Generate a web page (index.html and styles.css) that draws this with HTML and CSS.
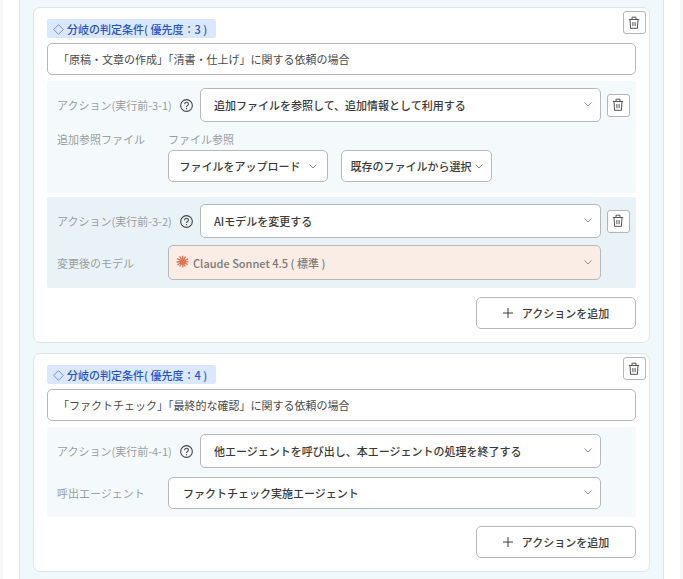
FILE: index.html
```html
<!DOCTYPE html>
<html lang="ja">
<head>
<meta charset="utf-8">
<meta name="viewport" content="width=device-width, initial-scale=1">
<title>分岐の判定条件</title>
<link rel="stylesheet" href="styles.css">
</head>
<body>
<svg class="sprite" aria-hidden="true">
  <symbol id="trash" viewBox="0 0 12 14"><path d="M0.8 3.5H11.2M4 3.3V1.2H8V3.3M2 3.8L2.6 12.3H9.4L10 3.8M4.9 6V10.2M7.1 6V10.2"/></symbol>
  <symbol id="chevron" viewBox="0 0 8 5"><path d="M0.5 0.5L4 4L7.5 0.5"/></symbol>
  <symbol id="help" viewBox="0 0 12 12"><circle cx="6" cy="6" r="5.4"/><path d="M4.2 4.8C4.2 2.4 7.8 2.4 7.8 4.6C7.8 5.9 6 5.8 6 7.4M6 8.4V9.4"/></symbol>
  <symbol id="plus" viewBox="0 0 10 10"><path d="M5 0V10M0 5H10"/></symbol>
  <symbol id="diamond" viewBox="0 0 11 11"><path d="M5.5 0.7L10.3 5.5L5.5 10.3L0.7 5.5Z"/></symbol>
</svg>
<main class="page">
  <div class="panel">
    <section class="card">
      <button class="icon-button card-delete" type="button" aria-label="条件を削除"><svg class="trash"><use href="#trash"/></svg></button>
      <h2 class="chip"><svg class="diamond"><use href="#diamond"/></svg>分岐の判定条件( 優先度：3 )</h2>
      <input class="condition" type="text" aria-label="判定条件" value="「原稿・文章の作成」「清書・仕上げ」に関する依頼の場合">
      <div class="action action-files">
        <div class="row">
          <label class="label label-action" for="a31">アクション(実行前-3-1)</label>
          <button class="help" type="button" aria-label="ヘルプ"><svg><use href="#help"/></svg></button>
          <div class="select"><select id="a31"><option>追加ファイルを参照して、追加情報として利用する</option></select><svg class="chevron"><use href="#chevron"/></svg></div>
          <div class="side"><button class="icon-button" type="button" aria-label="アクションを削除"><svg class="trash"><use href="#trash"/></svg></button></div>
        </div>
        <div class="row row-top">
          <span class="label label-field">追加参照ファイル</span>
          <div class="files">
            <span class="label">ファイル参照</span>
            <div class="file-buttons">
              <button class="button upload" type="button">ファイルをアップロード<svg class="inline-chevron"><use href="#chevron"/></svg></button>
              <button class="button existing" type="button">既存のファイルから選択<svg class="inline-chevron"><use href="#chevron"/></svg></button>
            </div>
          </div>
        </div>
      </div>
      <div class="action action-alt">
        <div class="row">
          <label class="label label-action" for="a32">アクション(実行前-3-2)</label>
          <button class="help" type="button" aria-label="ヘルプ"><svg><use href="#help"/></svg></button>
          <div class="select"><select id="a32"><option>AIモデルを変更する</option></select><svg class="chevron"><use href="#chevron"/></svg></div>
          <div class="side"><button class="icon-button" type="button" aria-label="アクションを削除"><svg class="trash"><use href="#trash"/></svg></button></div>
        </div>
        <div class="row">
          <label class="label label-field" for="model">変更後のモデル</label>
          <div class="select model"><svg class="burst" viewBox="0 0 14 14"><path d="M7 7L7.3 0.8M7 7L10.3 1.7M7 7L13 4.2M7 7L13.4 7.4M7 7L12.6 10.4M7 7L10 12.2M7 7L7.4 13.3M7 7L4 12.4M7 7L1.5 10.8M7 7L0.6 7.5M7 7L1.2 3.8M7 7L3.9 1.5"/></svg><select id="model"><option>Claude Sonnet 4.5 ( 標準 )</option></select><svg class="chevron"><use href="#chevron"/></svg></div>
          <div class="side"></div>
        </div>
      </div>
      <button class="button add" type="button"><svg class="plus"><use href="#plus"/></svg>アクションを追加</button>
    </section>
    <section class="card">
      <button class="icon-button card-delete" type="button" aria-label="条件を削除"><svg class="trash"><use href="#trash"/></svg></button>
      <h2 class="chip"><svg class="diamond"><use href="#diamond"/></svg>分岐の判定条件( 優先度：4 )</h2>
      <input class="condition" type="text" aria-label="判定条件" value="「ファクトチェック」「最終的な確認」に関する依頼の場合">
      <div class="action">
        <div class="row">
          <label class="label label-action" for="a41">アクション(実行前-4-1)</label>
          <button class="help" type="button" aria-label="ヘルプ"><svg><use href="#help"/></svg></button>
          <div class="select"><select id="a41"><option>他エージェントを呼び出し、本エージェントの処理を終了する</option></select><svg class="chevron"><use href="#chevron"/></svg></div>
          <div class="side"></div>
        </div>
        <div class="row">
          <label class="label label-field" for="agent">呼出エージェント</label>
          <div class="select agent"><select id="agent"><option>ファクトチェック実施エージェント</option></select><svg class="chevron"><use href="#chevron"/></svg></div>
          <div class="side"></div>
        </div>
      </div>
      <button class="button add" type="button"><svg class="plus"><use href="#plus"/></svg>アクションを追加</button>
    </section>
  </div>
</main>
</body>
</html>
```
FILE: styles.css
```css
* { box-sizing: border-box; }
body {
  margin: 0;
  background: #fff;
  font-family: "Noto Sans CJK JP", sans-serif;
  font-size: 11px;
  line-height: 16px;
  color: #3a3a3a;
}
button, input, select { font: inherit; color: inherit; margin: 0; }
svg { fill: none; stroke: currentColor; flex: none; }
.sprite { display: none; }
.page {
  min-height: 100vh;
  padding: 0 16px;
  border: solid #f7f7f7;
  border-width: 0 3px;
}
.panel {
  display: flex;
  flex-direction: column;
  gap: 10px;
  min-height: 100vh;
  padding: 7px 13px;
  background: #eff8fb;
  border: solid #d9e4e8;
  border-width: 0 1px;
}
.card {
  position: relative;
  display: flex;
  flex-direction: column;
  padding: 11px 13px 13px;
  background: #fff;
  border: 1px solid #dfe5e8;
  border-radius: 7px;
}
.chip {
  display: flex;
  align-items: center;
  align-self: flex-start;
  gap: 3px;
  margin: 0 0 5px;
  padding: 2px 9px 1px 6px;
  background: #dbe8fc;
  border-radius: 2px;
  color: #2855c6;
  font-size: 11px;
  font-weight: 500;
}
.diamond { width: 11px; height: 11px; color: #6f91d8; }
.condition {
  width: 100%;
  height: 32px;
  padding: 0 10px;
  border: 1px solid #b8b8b8;
  border-radius: 5px;
  background: #fff;
  color: #4a4a4a;
}
.action {
  display: flex;
  flex-direction: column;
  gap: 9px;
  margin-top: 6px;
  padding: 7px 0 8px;
  background: #f4fafc;
  border-radius: 2px;
}
.action-files { padding-bottom: 11px; }
.action-alt { margin-top: 4px; gap: 7px; background: #e9f2f7; }
.row { display: flex; align-items: center; padding-left: 10px; }
.row-top { align-items: flex-start; }
.label { color: #999ea1; white-space: nowrap; }
.label-action { width: 123px; }
.label-field { width: 111px; }
.help {
  width: 13px;
  height: 13px;
  margin-right: 7px;
  padding: 0;
  border: 0;
  background: none;
  color: #444;
}
.help svg { display: block; width: 13px; height: 13px; }
.select { position: relative; flex: 1; min-width: 0; }
.select select {
  display: block;
  width: 100%;
  height: 34px;
  padding: 0 28px 0 13px;
  appearance: none;
  border: 1px solid #b5b9bb;
  border-radius: 5px;
  background: #fff;
  font-weight: 500;
  text-overflow: ellipsis;
}
.chevron {
  position: absolute;
  top: 50%;
  right: 9px;
  width: 8px;
  height: 5px;
  margin-top: -3px;
  color: #8c8c8c;
  pointer-events: none;
}
.select.model select {
  height: 35px;
  padding-left: 24px;
  background: #f9ede5;
  color: #7d7976;
}
.select.agent select { height: 32px; padding-left: 14px; }
.burst {
  position: absolute;
  top: 10px;
  left: 8px;
  width: 13px;
  height: 13px;
  color: #df7554;
  stroke-width: 1.5;
}
.side { width: 35px; padding-left: 6px; }
.icon-button {
  display: flex;
  align-items: center;
  justify-content: center;
  width: 23px;
  height: 23px;
  padding: 0 1px 0 0;
  border: 1px solid #b5b5b5;
  border-radius: 3px;
  background: #fff;
  color: #555;
}
.trash { width: 12px; height: 14px; }
.card-delete { position: absolute; top: 3px; right: 3px; }
.files { display: flex; flex-direction: column; gap: 3px; }
.file-buttons { display: flex; gap: 13px; }
.button {
  display: flex;
  align-items: center;
  justify-content: center;
  height: 32px;
  padding: 0 7px;
  border: 1px solid #b5b9bb;
  border-radius: 5px;
  background: #fff;
  font-weight: 500;
  white-space: nowrap;
}
.upload { width: 160px; gap: 8px; }
.existing { width: 151px; gap: 3px; }
.inline-chevron { width: 8px; height: 5px; color: #8c8c8c; }
.add { align-self: flex-end; gap: 9px; width: 160px; margin-top: 9px; }
.plus { width: 10px; height: 10px; }
```
